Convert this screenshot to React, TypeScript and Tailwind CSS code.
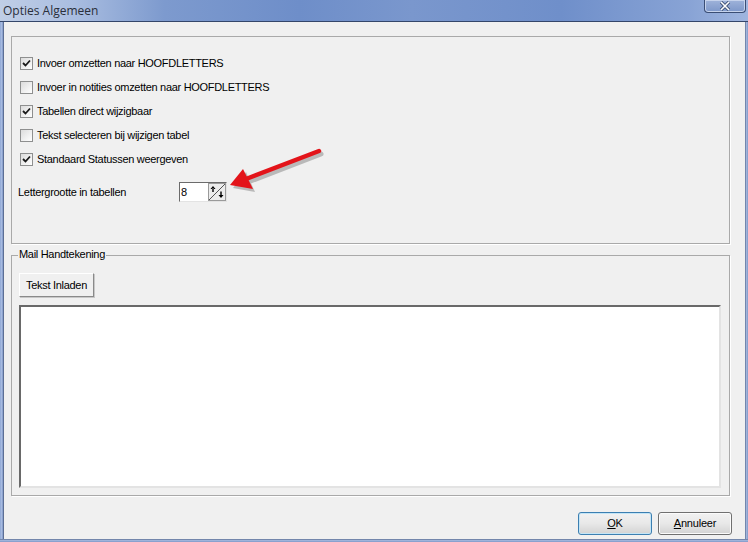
import React from 'react';

const font = { fontFamily: 'Tahoma, "Liberation Sans", "DejaVu Sans", sans-serif' };

const options = [
  { label: 'Invoer omzetten naar HOOFDLETTERS', checked: true },
  { label: 'Invoer in notities omzetten naar HOOFDLETTERS', checked: false },
  { label: 'Tabellen direct wijzigbaar', checked: true },
  { label: 'Tekst selecteren bij wijzigen tabel', checked: false },
  { label: 'Standaard Statussen weergeven', checked: true },
];

const CheckBox: React.FC<{ checked: boolean }> = ({ checked }) => (
  <div className="w-[13px] h-[13px] border border-[#8e8f8f] bg-gradient-to-br from-[#dcdcdc] to-white flex items-center justify-center shrink-0">
    {checked && (
      <svg width="9" height="9" viewBox="0 0 9 9">
        <path d="M1 4 L3.5 6.5 L8 1.5" fill="none" stroke="#1a1a1a" strokeWidth="1.8" />
      </svg>
    )}
  </div>
);

const VistaButton: React.FC<{ children: React.ReactNode; primary?: boolean }> = ({ children, primary }) => (
  <div
    className={`w-[74px] h-[23px] rounded-[3px] border flex items-center justify-center text-[11px] tracking-[-0.2px] text-black bg-gradient-to-b from-[#f2f2f2] via-[#e8e8e8] to-[#d3d3d3] ${
      primary ? 'border-[#3c7fb1] shadow-[inset_0_0_0_1px_#c4e5f6]' : 'border-[#707070] shadow-[inset_0_0_0_1px_#fbfbfb]'
    }`}
  >
    {children}
  </div>
);

export default function App() {
  return (
    <div className="w-[748px] h-[542px] relative overflow-hidden bg-[#7a96cc] flex flex-col" style={font}>
      {/* title bar */}
      <div className="h-[21px] relative flex items-center px-[3px] bg-[linear-gradient(90deg,#c0cee6_0%,#a9bde0_10%,#7d9ace_22%,#6e8ec9_40%,#7a97cd_55%,#6f8fca_75%,#88a3d5_92%,#9fb5df_100%)]">
        <span className="text-[12px] text-[#2a2f3a] leading-none" style={{ fontFamily: '"Open Sans", "Liberation Sans", sans-serif' }}>
          Opties Algemeen
        </span>
        <div className="absolute right-[2px] top-0 w-[42px] h-[13px] rounded-b-[4px] border border-t-0 border-[#3a4d74] bg-gradient-to-b from-[#9fb3da] to-[#7d97c9] flex items-center justify-center shadow-[inset_0_0_0_1px_#c6d3ec]">
          <svg width="12" height="10" viewBox="0 0 12 10">
            <path d="M2 1 L10 9 M10 1 L2 9" stroke="#3b4f72" strokeWidth="3.2" />
            <path d="M2 1 L10 9 M10 1 L2 9" stroke="#ffffff" strokeWidth="1.6" />
          </svg>
        </div>
      </div>
      <div className="h-[1px] bg-[#34466a]" />

      {/* window body */}
      <div className="flex-1 flex">
        <div className="w-[4px] bg-[linear-gradient(90deg,#8fa7d6,#a7bbe0,#8098c8)] border-r border-[#5d6f94]" />
        <div className="flex-1 bg-[#f0f0f0] flex flex-col pl-[7px] pr-[15px] pt-[14px] text-[11px] tracking-[-0.3px]">
          {/* group 1 */}
          <div className="h-[208px] border border-[#a9a9a9] shadow-[1px_1px_0_#ffffff] pl-[8px] pt-[20px] text-black">
            <div className="flex flex-col gap-[11px]">
              {options.map((o, i) => (
                <div key={i} className="flex items-center gap-[4px] h-[13px]">
                  <CheckBox checked={o.checked} />
                  <span className="leading-none">{o.label}</span>
                </div>
              ))}
            </div>
            <div className="flex items-center mt-[16px]">
              <span className="w-[161px] leading-none -ml-[2px]">Lettergrootte in tabellen</span>
              <div className="w-[48px] h-[20px] bg-white border border-t-[#6b6b6b] border-l-[#6b6b6b] border-r-[#e3e3e3] border-b-[#e3e3e3] flex items-center justify-between">
                <span className="pl-[1px] leading-none">8</span>
                <div className="w-[18px] h-[18px] border border-[#9a9a9a] bg-[#ececec]">
                  <svg width="16" height="16" viewBox="0 0 16 16">
                    <path d="M0 16 L16 0" stroke="#555" strokeWidth="1" />
                    <path d="M4 2 L1.5 5 L6.5 5 Z M3.3 4.5 L4.7 4.5 L4.7 8 L3.3 8 Z" fill="#000" />
                    <path d="M12 14 L9.5 11 L14.5 11 Z M11.3 7.5 L12.7 7.5 L12.7 11.5 L11.3 11.5 Z" fill="#000" />
                  </svg>
                </div>
              </div>
            </div>
          </div>

          {/* group 2 */}
          <div className="mt-[11px] h-[241px] border border-[#a9a9a9] shadow-[1px_1px_0_#ffffff] relative pl-[7px] pr-[7px] pt-[17px]">
            <span className="absolute -top-[7px] left-[6px] bg-[#f0f0f0] px-[1px] leading-none text-black">Mail Handtekening</span>
            <div className="w-[75px] h-[24px] border border-t-white border-l-white border-r-[#8a8a8a] border-b-[#8a8a8a] shadow-[1px_1px_0_#c8c8c8] bg-[#f0f0f0] flex items-center justify-center text-black">
              Tekst Inladen
            </div>
            <div className="mt-[8px] h-[183px] mr-[1px] bg-white border-2 border-t-[#696969] border-l-[#696969] border-r-[#e3e3e3] border-b-[#e3e3e3]" />
          </div>

          {/* buttons */}
          <div className="flex justify-end gap-[6px] mt-[16px] -mr-[2px]">
            <VistaButton primary>
              <span><span className="underline">O</span>K</span>
            </VistaButton>
            <VistaButton>
              <span><span className="underline">A</span>nnuleer</span>
            </VistaButton>
          </div>
        </div>
        <div className="w-[3px] bg-[linear-gradient(90deg,#5d6f94,#9fb3da,#8098c8)]" />
      </div>
      <div className="h-[3px] bg-[linear-gradient(180deg,#5d6f94,#9fb3da,#8098c8)]" />

      {/* red arrow annotation */}
      <svg className="absolute left-0 top-0 pointer-events-none" width="748" height="542">
        <g transform="translate(2,3)" opacity="0.35">
          <path d="M319 151 L246 179" stroke="#555" strokeWidth="5" strokeLinecap="round" />
          <path d="M231 185 L244 169 L253 189 Z" fill="#555" />
        </g>
        <path d="M319 151 L246 179" stroke="#e3141a" strokeWidth="4.5" strokeLinecap="round" />
        <path d="M230 185 L243 169 L253 189 Z" fill="#e3141a" />
      </svg>
    </div>
  );
}
